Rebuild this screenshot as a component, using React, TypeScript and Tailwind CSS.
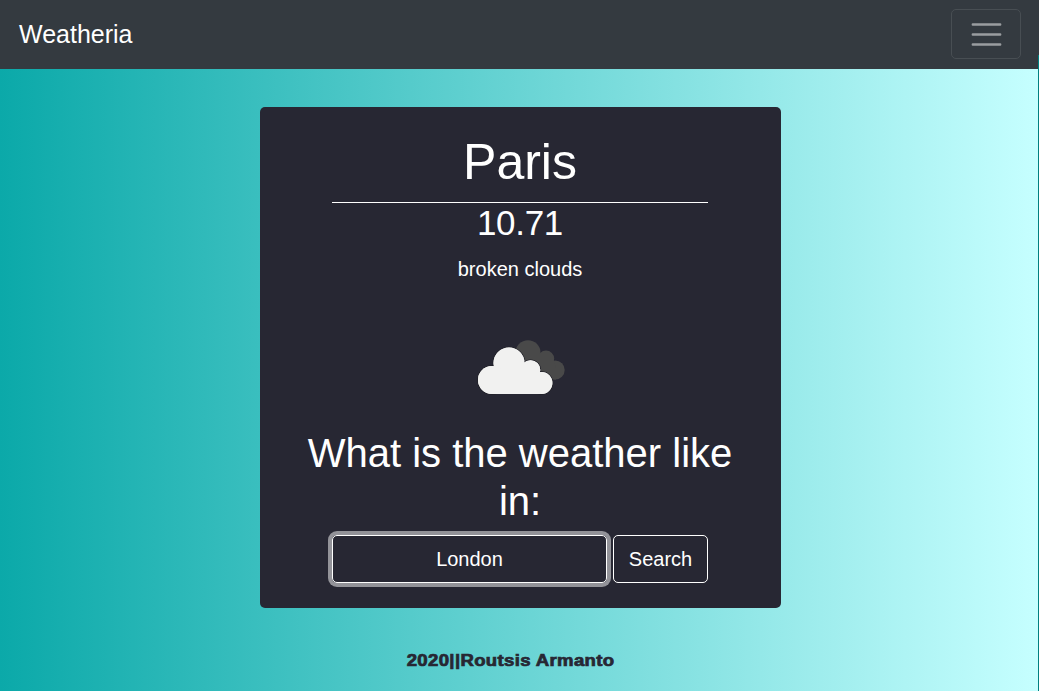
function CloudIcon() {
  return (
    <svg className="mt-[46px] ml-[2px] block h-[72px] w-[94px]" viewBox="474 330 94 72" aria-label="broken clouds">
      <g fill="#494949">
        <circle cx="528" cy="352.700" r="12.500" />
        <circle cx="546" cy="358.800" r="8.200" />
        <circle cx="555.200" cy="370" r="9.500" />
        <path d="M522 354h30l4 14v11.500h-24z" />
      </g>
      <g fill="#f1f1f0" stroke="#202027" strokeWidth="1.6" paintOrder="stroke">
        <circle cx="509" cy="363" r="15.500" />
        <circle cx="530.500" cy="370" r="9.800" />
        <circle cx="541.500" cy="383" r="10.900" />
        <circle cx="492" cy="380" r="14" />
      </g>
      <g fill="#f1f1f0">
        <circle cx="509" cy="363" r="15.500" />
        <circle cx="530.500" cy="370" r="9.800" />
        <circle cx="541.500" cy="383" r="10.900" />
        <circle cx="492" cy="380" r="14" />
        <path d="M492 372h48v21.900h-48z" />
      </g>
    </svg>
  );
}

export default function App() {
  return (
    <div className="relative flex h-[691px] w-[1039px] flex-col overflow-hidden font-['Liberation_Sans',Arial,sans-serif] text-white">
      <nav className="flex h-[69px] shrink-0 items-center justify-between bg-[#343a40] pr-[18px] pb-[2px] pl-[19px]">
        <span className="text-[25px] leading-[38px]">Weatheria</span>
        <button
          aria-label="Toggle navigation"
          className="flex h-[50px] w-[70px] items-center justify-center rounded-[5px] border border-[#484e53]"
        >
          <svg className="h-[38px] w-[38px]" viewBox="0 0 38 38" fill="none">
            <path
              d="M5.800 9.500h27.400M5.800 19.500h27.400M5.800 29.500h27.400"
              stroke="#fff"
              strokeOpacity="0.5"
              strokeWidth="2.4"
              strokeLinecap="round"
            />
          </svg>
        </button>
      </nav>
      <div className="flex min-h-0 flex-1 bg-[#008080] pr-px">
        <div className="flex flex-1 flex-col items-center bg-linear-to-r/srgb from-[#0ba9a9] to-[#c6ffff] pt-[38px]">
          <main className="ml-[3px] flex h-[501px] w-[521px] shrink-0 flex-col items-center rounded-[5px] bg-[#272733] pt-[25px] pr-px text-center">
            <h1 className="h-[71px] w-[376px] border-b border-white text-[50px] leading-[60px]">Paris</h1>
            <p className="-mt-px text-[35px] leading-[42px] tracking-[-0.3px]">10.71</p>
            <p className="mt-[10px] text-[20px] leading-[30px]">broken clouds</p>
            <CloudIcon />
            <h2 className="mt-[27px] w-[440px] text-[40px] leading-[48px]">What is the weather like in:</h2>
            <form className="mt-[10px] flex w-[376px] justify-between" onSubmit={(e) => e.preventDefault()}>
              <input
                aria-label="City"
                defaultValue="London"
                className="h-[48px] w-[275px] rounded-[5px] border border-white bg-transparent text-center text-[20px] shadow-[0_0_0_4px_#939399] outline-none"
              />
              <button className="h-[48px] w-[95px] rounded-[5px] border border-white text-[20px]">Search</button>
            </form>
          </main>
          <footer className="mt-[41px] mr-[17px] scale-x-[1.16] text-[16px] leading-[24px] font-black tracking-[0.3px] text-[#272733] [-webkit-text-stroke:0.7px_#272733]">
            2020||Routsis Armanto
          </footer>
        </div>
      </div>
      <div className="absolute top-[55px] right-0 h-[14px] w-px bg-[#008080]" />
    </div>
  );
}
